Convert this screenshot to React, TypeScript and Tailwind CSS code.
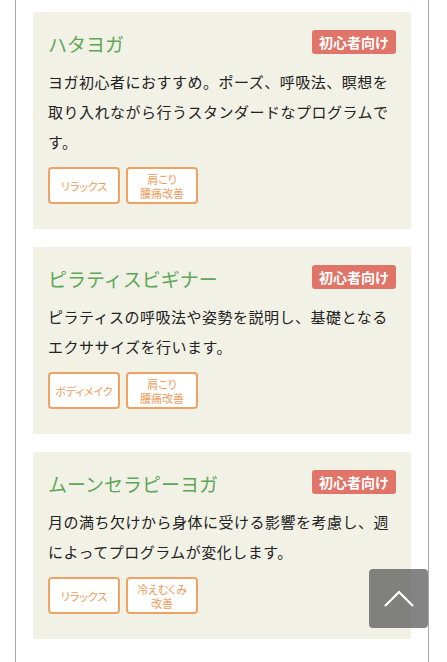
import React from 'react';

type Program = {
  title: string;
  level: string;
  description: string;
  tags: string[];
};

const programs: Program[] = [
  {
    title: 'ハタヨガ',
    level: '初心者向け',
    description: 'ヨガ初心者におすすめ。ポーズ、呼吸法、瞑想を取り入れながら行うスタンダードなプログラムです。',
    tags: ['リラックス', '肩こり\n腰痛改善'],
  },
  {
    title: 'ピラティスビギナー',
    level: '初心者向け',
    description: 'ピラティスの呼吸法や姿勢を説明し、基礎となるエクササイズを行います。',
    tags: ['ボディメイク', '肩こり\n腰痛改善'],
  },
  {
    title: 'ムーンセラピーヨガ',
    level: '初心者向け',
    description: '月の満ち欠けから身体に受ける影響を考慮し、週によってプログラムが変化します。',
    tags: ['リラックス', '冷えむくみ\n改善'],
  },
];

function ProgramCard({ program }: { program: Program }) {
  return (
    <div className="bg-[#f2f1e6] px-[15px] pt-[20px] pb-[25px]">
      <div className="flex items-center justify-between">
        <h3 className="text-[19px] leading-[24px] text-[#5ea758]">{program.title}</h3>
        <span className="-mt-[4px] h-[24px] w-[84px] rounded-[3px] bg-[#e07468] text-center text-[14px] font-bold leading-[24px] text-white">
          {program.level}
        </span>
      </div>

      <p className="mt-[11px] text-[15px] leading-[30px] tracking-[0.5px] text-[#222]">{program.description}</p>

      <div className="mt-[10px] flex gap-[6px]">
        {program.tags.map((tag) => (
          <div
            key={tag}
            className="flex h-[37px] w-[72px] items-center justify-center whitespace-pre-line rounded-[4px] border-2 border-[#f0a263] bg-white text-center text-[11px] leading-[14px] text-[#ee9c5c] [font-feature-settings:'palt']"
          >
            {tag}
          </div>
        ))}
      </div>
    </div>
  );
}

export default function App() {
  return (
    <div className="min-h-screen bg-white" style={{ fontFamily: '"Noto Sans CJK JP", "Noto Sans", sans-serif' }}>
      <div className="ml-[15px] w-[414px] min-h-screen border-x border-[#a8a8a8] px-[17px] pt-[12px] pb-[18px]">
        <div className="flex flex-col gap-[18px]">
          {programs.map((p) => (
            <ProgramCard key={p.title} program={p} />
          ))}
        </div>
      </div>

      {/* page top button */}
      <button className="fixed right-[19px] bottom-[34px] flex h-[59px] w-[59px] items-center justify-center rounded-[4px] bg-[#505050]/70">
        <svg width="32" height="20" viewBox="0 0 32 20" fill="none" stroke="white" strokeWidth={2.2}>
          <path d="M2 17 L16 3 L30 17" />
        </svg>
      </button>
    </div>
  );
}
